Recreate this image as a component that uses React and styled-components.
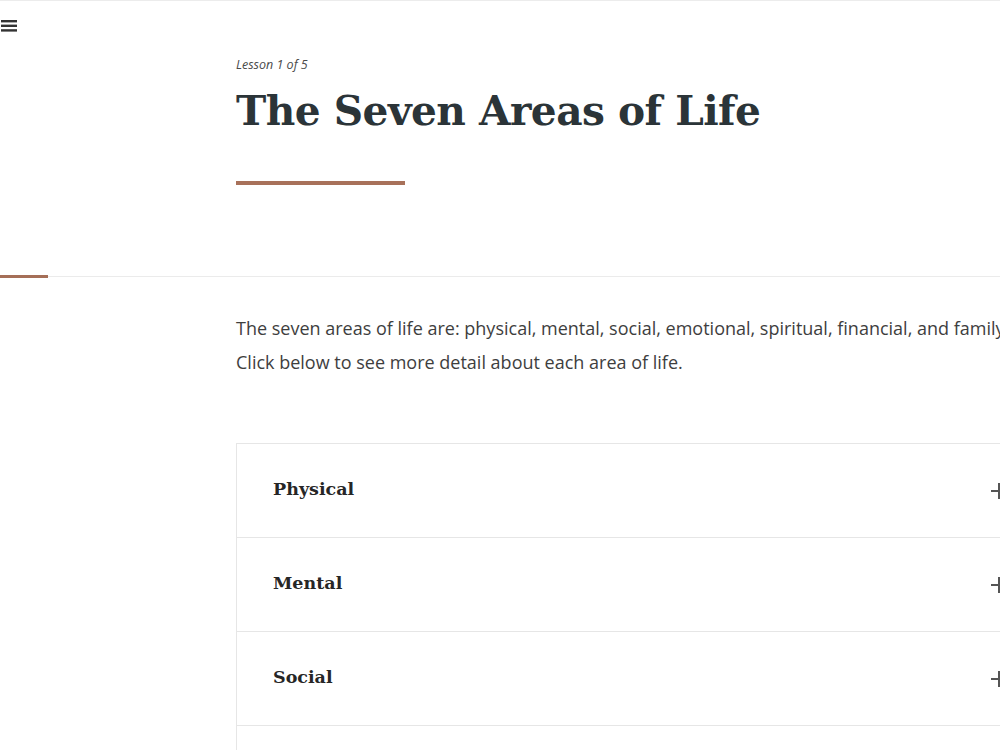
import React from "react";
import styled, { createGlobalStyle } from "styled-components";

const GlobalStyle = createGlobalStyle`
  html, body {
    margin: 0;
    padding: 0;
    background: #fff;
    overflow-x: hidden;
  }
  body {
    font-family: "Open Sans", "Liberation Sans", sans-serif;
    color: #3a3a3a;
  }
`;

const Page = styled.div`
  width: 1000px;
  border-top: 1px solid #ececec;
`;

const MenuButton = styled.button`
  display: block;
  background: none;
  border: none;
  padding: 0;
  margin: 19px 0 0 1px;
  width: 16px;
  height: 12px;
  cursor: pointer;
`;

const Header = styled.header`
  position: relative;
  height: 256px;
  border-bottom: 1px solid #ebebeb;
`;

const Progress = styled.div`
  position: absolute;
  left: 0;
  bottom: -2px;
  height: 3px;
  background: #a56f58;
`;

const Column = styled.div`
  margin-left: 236px;
  width: 808px;
`;

const HeaderInner = styled(Column)`
  padding-top: 24px;
`;

const LessonLabel = styled.div`
  font-style: italic;
  font-size: 12.5px;
  color: #4a4a4a;
  line-height: 18px;
`;

const Title = styled.h1`
  margin: 7px 0 0;
  font-family: "DejaVu Serif", "Liberation Serif", serif;
  font-weight: 700;
  font-size: 40.7px;
  line-height: 60px;
  color: #2b3438;
  letter-spacing: -0.55px;
`;

const Rule = styled.div`
  margin-top: 40px;
  width: 169px;
  height: 4px;
  background: #a8715a;
`;

const Intro = styled.p`
  margin: 34px 0 0;
  font-size: 18px;
  line-height: 34px;
  color: #3e3e3e;
  white-space: nowrap;
`;

const Accordion = styled.div`
  margin-top: 64px;
  border: 1px solid #e6e6e6;
`;

const Row = styled.div`
  display: flex;
  align-items: center;
  justify-content: space-between;
  height: 93px;
  padding: 0 36px;
  border-top: ${(p) => (p.$first ? "none" : "1px solid #e6e6e6")};
`;

const RowTitle = styled.span`
  font-family: "DejaVu Serif", "Liberation Serif", serif;
  font-weight: 700;
  font-size: 17.5px;
  color: #262626;
  margin-top: -4px;
`;

const Plus = styled.span`
  position: relative;
  width: 16px;
  height: 16px;
  &::before,
  &::after {
    content: "";
    position: absolute;
    background: #555;
  }
  &::before {
    left: 0;
    right: 0;
    top: 7px;
    height: 2px;
  }
  &::after {
    top: 0;
    bottom: 0;
    left: 7px;
    width: 2px;
  }
`;

const areas = ["Physical", "Mental", "Social", "Emotional"];

export default function App() {
  return (
    <Page>
      <GlobalStyle />
      <Header>
        <MenuButton aria-label="Menu">
          <svg width="16" height="12" viewBox="0 0 16 12">
            <rect x="0" y="0" width="16" height="2.4" fill="#333" />
            <rect x="0" y="4.6" width="16" height="2.4" fill="#333" />
            <rect x="0" y="9.2" width="16" height="2.4" fill="#333" />
          </svg>
        </MenuButton>
        <HeaderInner>
          <LessonLabel>Lesson 1 of 5</LessonLabel>
          <Title>The Seven Areas of Life</Title>
          <Rule />
        </HeaderInner>
        <Progress style={{ width: `${(1 / 5) * 240}px` }} />
      </Header>
      <Column>
        <Intro>
          The seven areas of life are: physical, mental, social, emotional, spiritual, financial, and family.
          <br />
          Click below to see more detail about each area of life.
        </Intro>
        <Accordion>
          {areas.map((a, i) => (
            <Row key={a} $first={i === 0}>
              <RowTitle>{a}</RowTitle>
              <Plus />
            </Row>
          ))}
        </Accordion>
      </Column>
    </Page>
  );
}
